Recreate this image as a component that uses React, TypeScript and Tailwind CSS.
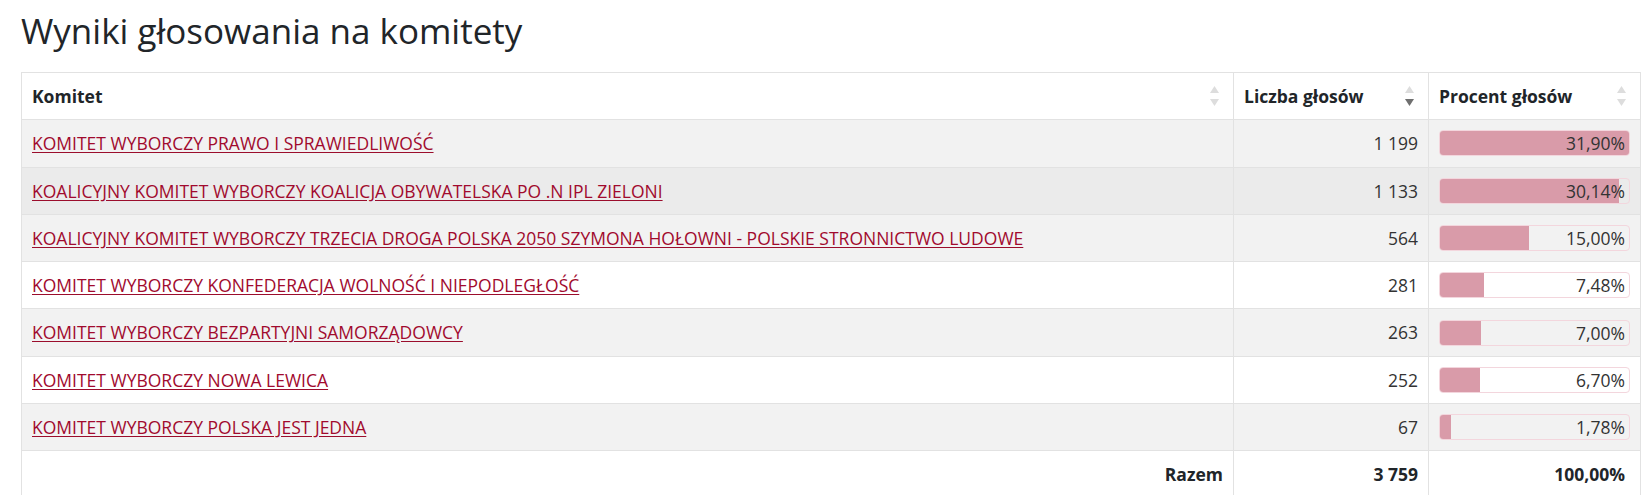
import React from "react";

type Row = { name: string; votes: string; pct: number; label: string };

const rows: Row[] = [
  { name: "KOMITET WYBORCZY PRAWO I SPRAWIEDLIWOŚĆ", votes: "1 199", pct: 31.9, label: "31,90%" },
  { name: "KOALICYJNY KOMITET WYBORCZY KOALICJA OBYWATELSKA PO .N IPL ZIELONI", votes: "1 133", pct: 30.14, label: "30,14%" },
  { name: "KOALICYJNY KOMITET WYBORCZY TRZECIA DROGA POLSKA 2050 SZYMONA HOŁOWNI - POLSKIE STRONNICTWO LUDOWE", votes: "564", pct: 15.0, label: "15,00%" },
  { name: "KOMITET WYBORCZY KONFEDERACJA WOLNOŚĆ I NIEPODLEGŁOŚĆ", votes: "281", pct: 7.48, label: "7,48%" },
  { name: "KOMITET WYBORCZY BEZPARTYJNI SAMORZĄDOWCY", votes: "263", pct: 7.0, label: "7,00%" },
  { name: "KOMITET WYBORCZY NOWA LEWICA", votes: "252", pct: 6.7, label: "6,70%" },
  { name: "KOMITET WYBORCZY POLSKA JEST JEDNA", votes: "67", pct: 1.78, label: "1,78%" },
];

const MAX = 31.9;

function SortIcon({ active }: { active?: "down" }) {
  return (
    <svg width="9" height="20" viewBox="0 0 9 20" className="absolute right-[14px] top-1/2 -translate-y-1/2">
      <polygon points="0,7 4.5,0 9,7" fill="#dddddd" />
      <polygon points="0,13 9,13 4.5,20" fill={active === "down" ? "#6f6f6f" : "#dddddd"} />
    </svg>
  );
}

export default function App() {
  const cell = "border-r border-b border-[#e2e2e2] py-[10px] leading-[26.3px]";
  return (
    <div className="min-h-[495px] bg-white text-[#333333]" style={{ fontFamily: '"Open Sans", "Noto Sans", sans-serif' }}>
      <div className="pl-[21px] pt-[10px]">
        <h1 className="text-[35px] leading-[42px] font-normal text-[#212529] mb-[20px]">
          Wyniki głosowania na komitety
        </h1>
        <div className="w-[1620px] border-l border-t border-[#e2e2e2] grid grid-cols-[minmax(0,1fr)_195px_212px] text-[17.5px]">
          {/* header */}
          <div className={`${cell} relative px-[10px] font-bold text-[#212529] bg-white`}>
            Komitet
            <SortIcon />
          </div>
          <div className={`${cell} relative px-[10px] font-bold text-[#212529] bg-white`}>
            Liczba głosów
            <SortIcon active="down" />
          </div>
          <div className={`${cell} relative px-[10px] font-bold text-[#212529] bg-white`}>
            Procent głosów
            <SortIcon />
          </div>

          {rows.map((r, i) => {
            const bg = i === 1 ? "bg-[#ebebeb]" : i % 2 === 0 ? "bg-[#f2f2f2]" : "bg-white";
            return (
              <React.Fragment key={r.name}>
                <div className={`${cell} ${bg} px-[10px] whitespace-nowrap overflow-hidden`}>
                  <a href="#" className="text-[#a10a2e] underline decoration-[#9b0d2c] underline-offset-[2px]">
                    {r.name}
                  </a>
                </div>
                <div className={`${cell} ${bg} px-[10px] text-right`}>{r.votes}</div>
                <div className={`border-r border-b border-[#e2e2e2] ${bg} px-[10px] flex items-center`}>
                  <div className="relative w-full h-[26px] rounded-[4px] border border-[#f3d6dd] overflow-hidden">
                    <div
                      className="absolute left-0 top-0 bottom-0 bg-[#d99ba9]"
                      style={{ width: `${(r.pct / MAX) * 100}%` }}
                    />
                    <div className="relative text-right pr-[4px] leading-[24px] text-[#333333]">{r.label}</div>
                  </div>
                </div>
              </React.Fragment>
            );
          })}

          {/* footer */}
          <div className={`${cell} px-[10px] text-right font-bold text-[#212529] bg-white`}>Razem</div>
          <div className={`${cell} px-[10px] text-right font-bold text-[#212529] bg-white`}>3 759</div>
          <div className={`${cell} pl-[10px] pr-[15px] text-right font-bold text-[#212529] bg-white`}>100,00%</div>
        </div>
      </div>
    </div>
  );
}
